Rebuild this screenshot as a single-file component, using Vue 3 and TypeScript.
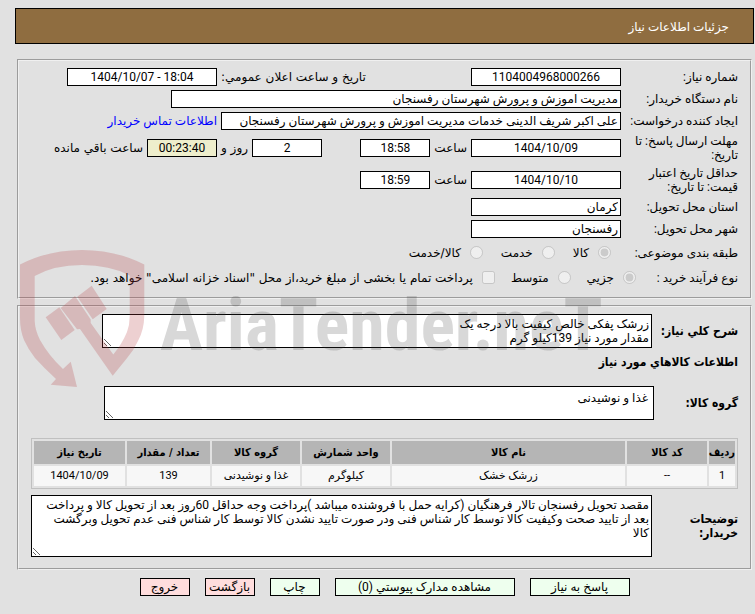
<script setup lang="ts">
import { ref } from 'vue'

interface Item {
  row: number
  code: string
  name: string
  unit: string
  group: string
  quantity: string
  date: string
}

interface Action {
  label: string
  size: 'small' | 'medium' | 'large'
  tone: 'go' | 'leave'
}

const needNumber = ref('1104004968000266')
const announcedAt = ref('1404/10/07 - 18:04')
const buyer = ref('مدیریت اموزش و پرورش شهرستان رفسنجان')
const creator = ref('علی اکبر شریف الدینی خدمات مدیریت اموزش و پرورش شهرستان رفسنجان')
const replyDate = ref('1404/10/09')
const replyTime = ref('18:58')
const daysLeft = ref('2')
const timeLeft = ref('00:23:40')
const validDate = ref('1404/10/10')
const validTime = ref('18:59')
const province = ref('کرمان')
const city = ref('رفسنجان')
const category = ref('کالا')
const process = ref('جزیي')
const treasury = ref(false)

const categories: string[] = ['کالا', 'خدمت', 'کالا/خدمت']
const processes: string[] = ['جزیي', 'متوسط']

const summary = ref('زرشک پفکی خالص کیفیت بالا درجه یک\nمقدار مورد نیاز 139کیلو گرم')
const goodsGroup = ref('غذا و نوشیدنی')
const notes = ref(
  'مقصد تحویل رفسنجان تالار فرهنگیان (کرایه حمل با فروشنده میباشد )پرداخت وجه حداقل 60روز بعد از تحویل کالا و پرداخت\n' +
    'بعد از تایید صحت وکیفیت کالا توسط کار شناس فنی ودر صورت تایید نشدن کالا توسط کار شناس فنی عدم تحویل وبرگشت\n' +
    'کالا',
)

const items: Item[] = [
  {
    row: 1,
    code: '--',
    name: 'زرشک خشک',
    unit: 'کیلوگرم',
    group: 'غذا و نوشیدنی',
    quantity: '139',
    date: '1404/10/09',
  },
]

const actions: Action[] = [
  { label: 'پاسخ به نیاز', size: 'medium', tone: 'go' },
  { label: 'مشاهده مدارک پیوستي (0)', size: 'large', tone: 'go' },
  { label: 'چاپ', size: 'small', tone: 'go' },
  { label: 'بازگشت', size: 'small', tone: 'leave' },
  { label: 'خروج', size: 'small', tone: 'leave' },
]
</script>

<template>
  <main class="page" dir="rtl" lang="fa">
    <header class="title-bar">جزئیات اطلاعات نیاز</header>

    <fieldset class="panel panel-info">
      <div class="row">
        <label class="caption" for="need-number">شماره نیاز:</label>
        <div class="main">
          <input id="need-number" v-model="needNumber" class="box w-date" readonly />
          <label class="side" for="announced">تاریخ و ساعت اعلان عمومي:</label>
        </div>
        <input id="announced" v-model="announcedAt" class="box w-date" dir="ltr" readonly />
      </div>

      <div class="row">
        <label class="caption" for="buyer">نام دستگاه خریدار:</label>
        <input id="buyer" v-model="buyer" class="box text w-buyer" readonly />
      </div>

      <div class="row">
        <label class="caption" for="creator">ایجاد کننده درخواست:</label>
        <div class="main">
          <input id="creator" v-model="creator" class="box text w-full" readonly />
        </div>
        <a class="link" href="#contact">اطلاعات تماس خریدار</a>
      </div>

      <div class="row row-tall">
        <label class="caption" for="reply-date">مهلت ارسال پاسخ: تا<br />تاریخ:</label>
        <div class="main">
          <span class="pair">
            <input id="reply-date" v-model="replyDate" class="box w-date" readonly />
            <label class="side" for="reply-time">ساعت</label>
            <input id="reply-time" v-model="replyTime" class="box w-time" readonly />
          </span>
          <span class="pair">
            <input id="days-left" v-model="daysLeft" class="box w-time" readonly />
            <label class="side" for="days-left">روز و</label>
          </span>
        </div>
        <input id="time-left" v-model="timeLeft" class="box w-time countdown" readonly />
        <label class="side" for="time-left">ساعت باقي مانده</label>
      </div>

      <div class="row row-tall">
        <label class="caption" for="valid-date">حداقل تاریخ اعتبار<br />قیمت: تا تاریخ:</label>
        <span class="pair">
          <input id="valid-date" v-model="validDate" class="box w-date" readonly />
          <label class="side" for="valid-time">ساعت</label>
          <input id="valid-time" v-model="validTime" class="box w-time" readonly />
        </span>
      </div>

      <div class="row">
        <label class="caption" for="province">استان محل تحویل:</label>
        <input id="province" v-model="province" class="box text w-date" readonly />
      </div>

      <div class="row">
        <label class="caption" for="city">شهر محل تحویل:</label>
        <input id="city" v-model="city" class="box text w-date" readonly />
      </div>

      <div class="row row-choice" role="radiogroup" aria-labelledby="category-caption">
        <span id="category-caption" class="caption">طبقه بندی موضوعی:</span>
        <span class="choices choices-inset">
          <label v-for="option in categories" :key="option" class="choice">
            <input v-model="category" type="radio" name="category" :value="option" disabled />
            <span>{{ option }}</span>
          </label>
        </span>
      </div>

      <div class="row row-choice" role="radiogroup" aria-labelledby="process-caption">
        <span id="process-caption" class="caption caption-narrow">نوع فرآیند خرید :</span>
        <span class="choices">
          <label v-for="option in processes" :key="option" class="choice">
            <input v-model="process" type="radio" name="process" :value="option" disabled />
            <span>{{ option }}</span>
          </label>
          <label class="choice">
            <input v-model="treasury" type="checkbox" disabled />
            <span>پرداخت تمام یا بخشی از مبلغ خرید،از محل "اسناد خزانه اسلامی" خواهد بود.</span>
          </label>
        </span>
      </div>
    </fieldset>

    <fieldset class="panel panel-goods">
      <div class="area-row">
        <label class="area-caption" for="summary">شرح کلي نیاز:</label>
        <textarea id="summary" v-model="summary" class="area w-area" rows="2" readonly></textarea>
      </div>

      <h2 class="heading">اطلاعات کالاهاي مورد نیاز</h2>

      <div class="area-row">
        <label class="area-caption area-caption-group" for="goods-group">گروه کالا:</label>
        <textarea
          id="goods-group"
          v-model="goodsGroup"
          class="area w-area area-roomy"
          rows="2"
          readonly
        ></textarea>
      </div>

      <table class="goods">
        <colgroup>
          <col class="col-row" />
          <col class="col-code" />
          <col />
          <col class="col-mid" />
          <col class="col-mid" />
          <col class="col-qty" />
          <col class="col-date" />
        </colgroup>
        <thead>
          <tr>
            <th scope="col">ردیف</th>
            <th scope="col">کد کالا</th>
            <th scope="col">نام کالا</th>
            <th scope="col">واحد شمارش</th>
            <th scope="col">گروه کالا</th>
            <th scope="col">تعداد / مقدار</th>
            <th scope="col">تاریخ نیاز</th>
          </tr>
        </thead>
        <tbody>
          <tr v-for="item in items" :key="item.row">
            <td>{{ item.row }}</td>
            <td>{{ item.code }}</td>
            <td>{{ item.name }}</td>
            <td>{{ item.unit }}</td>
            <td>{{ item.group }}</td>
            <td>{{ item.quantity }}</td>
            <td>{{ item.date }}</td>
          </tr>
        </tbody>
      </table>

      <div class="area-row">
        <label class="area-caption" for="notes">توضیحات<br />خریدار:</label>
        <textarea id="notes" v-model="notes" class="area area-notes" rows="4" readonly></textarea>
      </div>
    </fieldset>

    <div class="actions">
      <button
        v-for="action in actions"
        :key="action.label"
        type="button"
        class="action"
        :class="[action.size, action.tone]"
      >
        {{ action.label }}
      </button>
    </div>

    <div class="watermark" dir="ltr">
      <svg class="shield" viewBox="0 0 126 138" aria-hidden="true">
        <path
          d="M0 14.5Q28 0 62 0Q96 0 124.300 14.500V66Q124 80 118 91Q114 100 106.700 108.500L92.700 125.700L60 79L57 79.300L40.700 58L55 46L70.700 69.500V73L93.300 104.500Q102 94 107 82Q109.700 75 109.700 66V25.500Q90 15 62 15Q34 15 14.700 26V71Q15 80 20 90Q29 106 43 119L50.700 111.700L57 137L30.700 134.700L36 129Q24 118 15 108Q8 99 4 90Q0 80 0 68Z"
        />
        <path d="M25.700 67.300L39.300 57.300L54.700 80L41.300 90Z" />
        <path d="M57.300 46.700L71.700 35.700L86.700 59L72.700 69.300Z" />
      </svg>
      <span class="brand">AriaTender.neT</span>
    </div>
  </main>
</template>

<style>
body {
  margin: 0;
  background: #e1e1e1;
}
</style>

<style scoped>
.page {
  position: relative;
  padding: 8px 1px 16px 15px;
  color: #000;
  font: 12px/14px Roboto, 'DejaVu Sans', sans-serif;
}

.title-bar {
  box-sizing: border-box;
  height: 36px;
  padding: 11px 24px;
  border: 1px solid #000;
  background: #8f6d40;
  color: #fff;
}

.panel {
  min-width: 0;
  margin: 0 2px;
  border: 2px groove #f0f0f0;
}

.panel-info {
  margin-top: 15px;
  padding: 5px 12px 7px;
}

.panel-goods {
  margin-top: 6px;
  padding: 7px 12px 11px;
}

.row {
  display: flex;
  align-items: center;
  gap: 4px;
  height: 22px;
  white-space: nowrap;
}

.row-tall {
  height: 32px;
}

.row-choice {
  height: 25px;
}

.caption {
  flex: none;
  width: 113px;
}

.caption-narrow {
  width: 98px;
}

.side,
.choice {
  font-family: 'DejaVu Sans', sans-serif;
}

.main {
  display: flex;
  flex: 0 1 400px;
  align-items: center;
  justify-content: space-between;
}

.pair {
  display: flex;
  align-items: center;
  gap: 4px;
}

.box {
  box-sizing: border-box;
  height: 18px;
  padding: 0 2px;
  border: 1px solid #000;
  border-radius: 0;
  background: #fff;
  color: #000;
  font: inherit;
  text-align: center;
}

.text {
  text-align: right;
}

.countdown {
  background: #eeeecc;
}

.w-date {
  width: 150px;
}

.w-time {
  width: 70px;
}

.w-buyer {
  width: 450px;
}

.w-full {
  width: 100%;
}

.link {
  color: #00f;
  text-decoration: none;
}

.choices {
  display: flex;
  gap: 16px;
}

.choices-inset {
  gap: 18px;
  padding-right: 6px;
}

.choice {
  display: flex;
  align-items: center;
  gap: 9px;
}

.choices-inset {
  padding-right: 10px;
}

.choice input {
  width: 13px;
  height: 13px;
  margin: 0;
}

.area-row {
  display: flex;
  align-items: center;
}

.area-caption {
  flex: none;
  width: 86px;
  font-family: 'DejaVu Sans Condensed', 'DejaVu Sans', sans-serif;
  font-weight: bold;
}

.area-caption-group {
  width: 84px;
}

.area {
  box-sizing: border-box;
  margin: 0;
  padding: 2px;
  border: 1px solid #000;
  border-radius: 0;
  background: #fff;
  color: #000;
  font: inherit;
  overflow: hidden;
  resize: both;
}

.w-area {
  width: 550px;
  height: 34px;
}

.area-roomy {
  padding: 4px 5px;
}

.area-notes {
  flex: 1;
  height: 62px;
}

.heading {
  margin: 7px 0 17px;
  font: bold 12px/14px 'DejaVu Sans Condensed', 'DejaVu Sans', sans-serif;
}

.goods {
  width: 100%;
  margin: 18px 0 6px;
  border: 1px solid #c0c0c0;
  border-spacing: 2px;
  table-layout: fixed;
  font-size: 11px;
  text-align: center;
}

.goods th,
.goods td {
  padding: 0;
  white-space: nowrap;
}

.goods th {
  height: 23px;
  background: #b5b5b5;
  font-family: 'DejaVu Sans Condensed', 'DejaVu Sans', sans-serif;
}

.goods td {
  height: 20px;
  background: #f7f7f7;
}

.col-row {
  width: 26px;
}

.col-code {
  width: 80px;
}

.col-mid {
  width: 88px;
}

.col-qty {
  width: 83px;
}

.col-date {
  width: 91px;
}

.actions {
  display: flex;
  justify-content: center;
  gap: 15px;
  margin-top: 8px;
}

.action {
  height: 18px;
  padding: 0;
  border: 1px solid #000;
  border-radius: 0;
  color: #000;
  font: inherit;
  white-space: nowrap;
}

.small {
  width: 50px;
}

.medium {
  width: 100px;
}

.large {
  width: 180px;
}

.go {
  background: #eeffee;
}

.leave {
  background: #ffdddd;
}

.watermark {
  position: absolute;
  top: 250px;
  left: 20px;
  display: flex;
  align-items: center;
  gap: 14px;
  pointer-events: none;
}

.shield {
  width: 126px;
  height: 138px;
  fill: rgba(180, 59, 62, 0.24);
}

.brand {
  padding-top: 14px;
  color: rgba(60, 60, 60, 0.2);
  font: bold 72px/80px 'Roboto Condensed', 'Liberation Sans', sans-serif;
}
</style>
